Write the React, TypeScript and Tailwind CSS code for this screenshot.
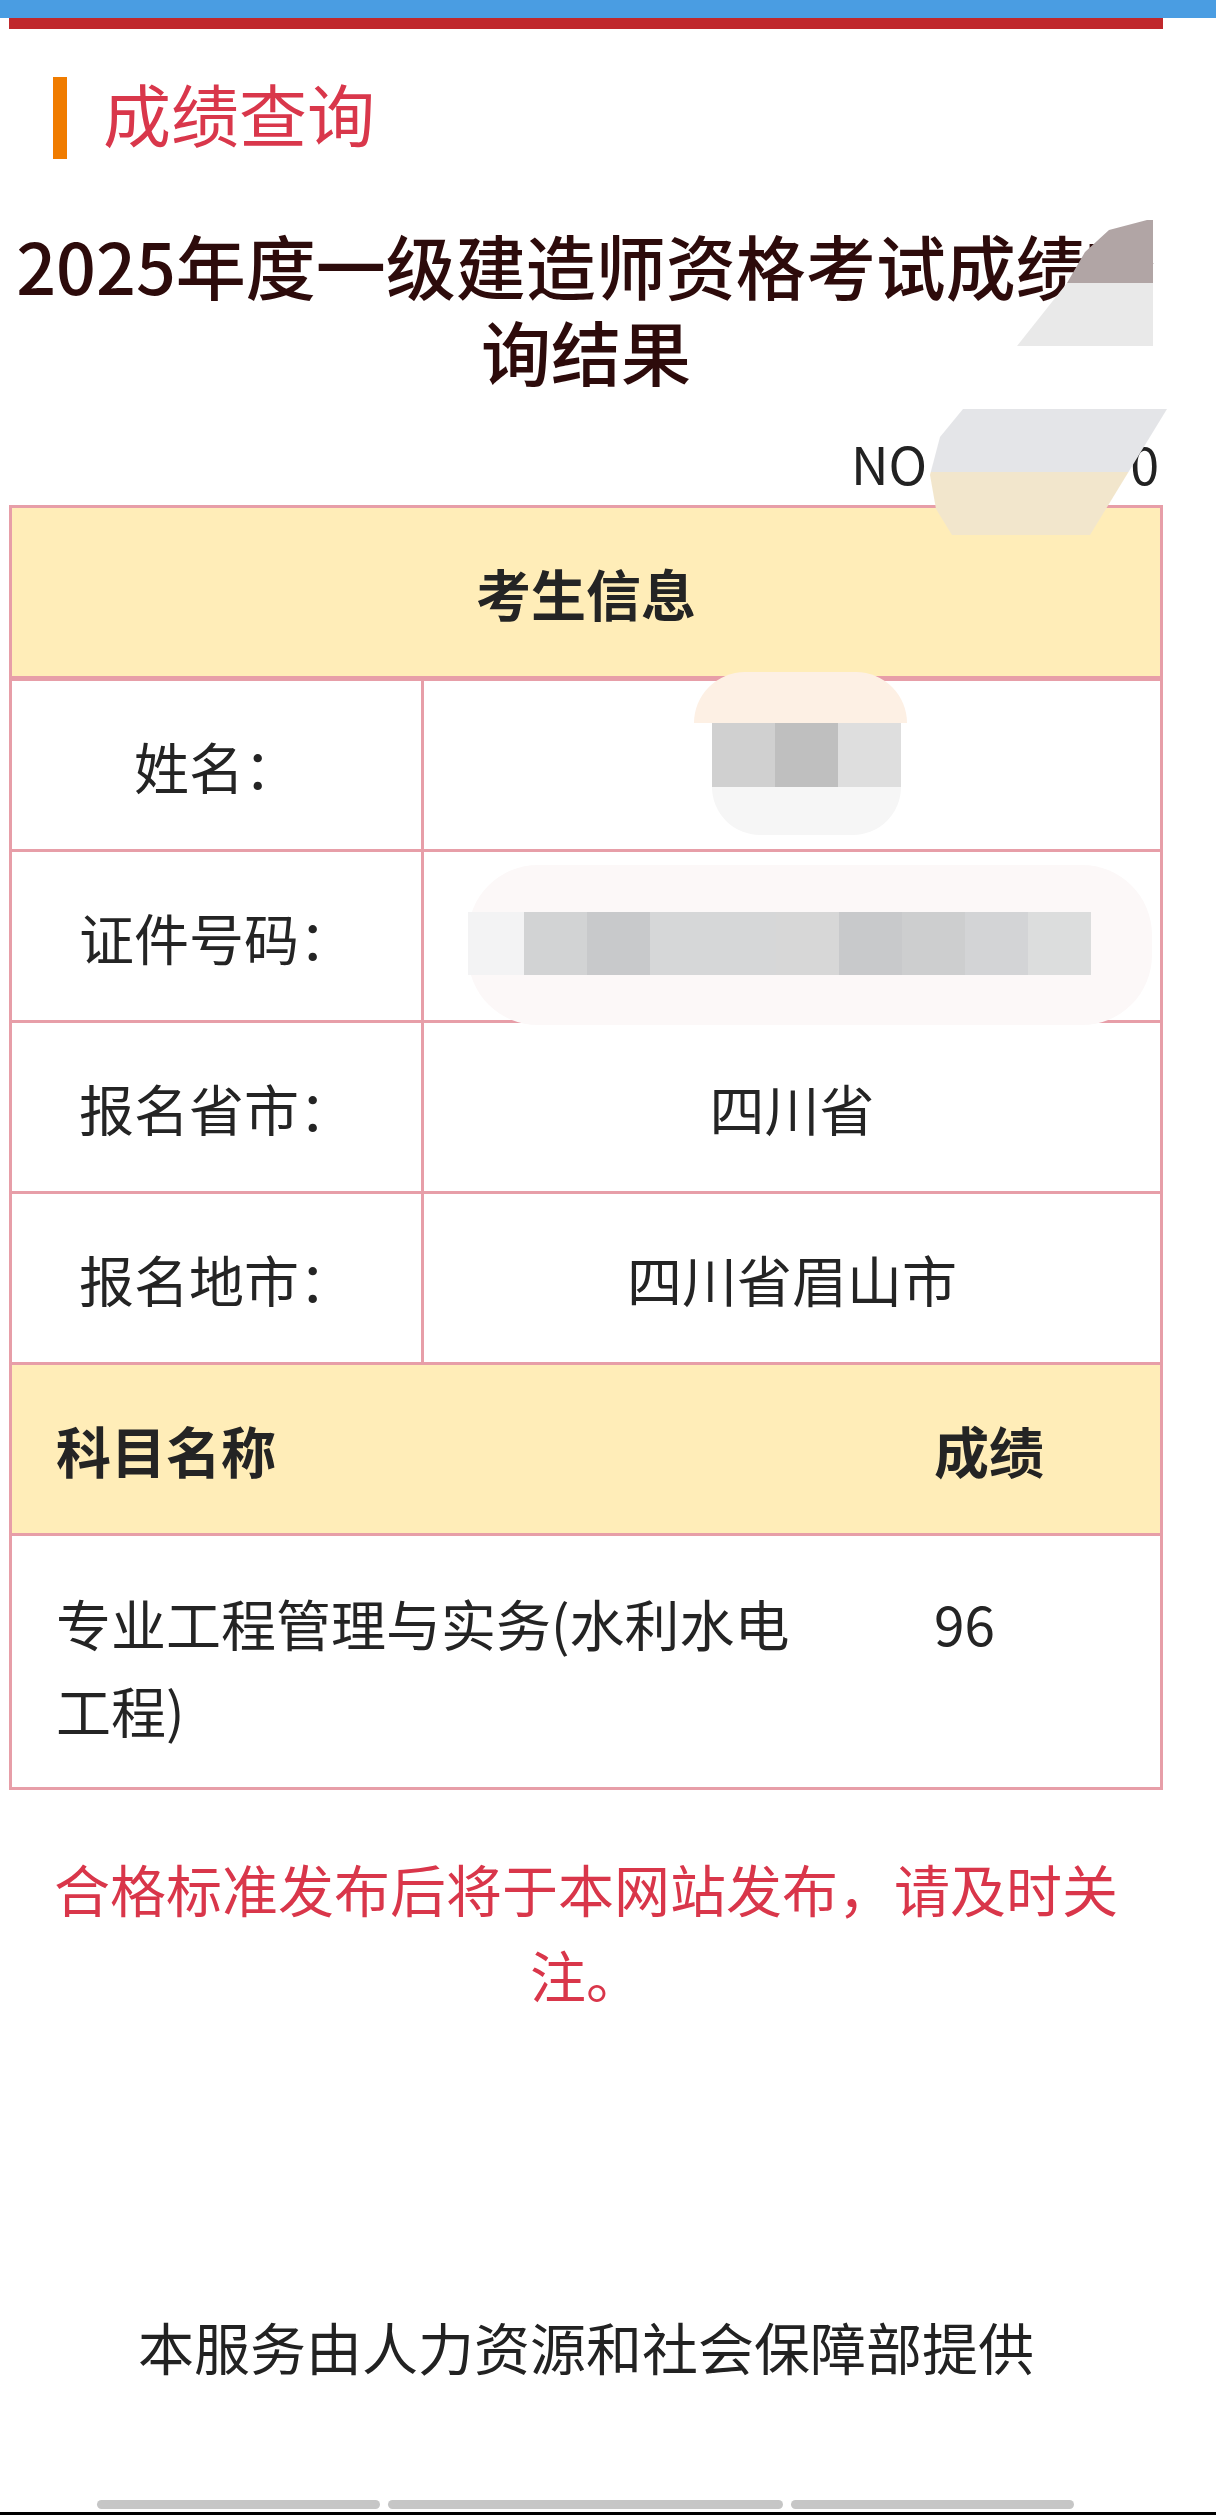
const infoRows = [
  { label: '姓名：', value: '' },
  { label: '证件号码：', value: '' },
  { label: '报名省市：', value: '四川省' },
  { label: '报名地市：', value: '四川省眉山市' },
];

const idCells = ['#d2d3d4', '#c8c9cb', '#d6d7d8', '#d6d7d8', '#d7d7d7', '#c8c9cb', '#cdcecf', '#d3d4d6', '#dcdddd'];

function Masks() {
  return (
    <>
      {/* title tail */}
      <div className="absolute left-[1017px] top-[220px] h-[126px] w-[136px] bg-[linear-gradient(to_bottom,#b1a5a5_50%,#e9e9e9_50%)] [clip-path:polygon(130px_0,136px_0,136px_126px,0_126px,50px_63px,68px_32px,92px_10px)]" />
      {/* number */}
      <div className="absolute left-[930px] top-[409px] h-[126px] w-[237px] bg-[linear-gradient(to_bottom,#e4e5e8_50%,#f2e6cc_50%)] [clip-path:polygon(33px_0,237px_0,160px_126px,22px_126px,6px_100px,0_66px,10px_28px)]" />
      {/* name */}
      <div className="absolute left-[694px] top-[672px] h-[51px] w-[213px] rounded-t-[100px] bg-[#fdf0e4]" />
      <div className="absolute left-[712px] top-[723px] flex h-[64px]">
        <span className="w-[63px] bg-[#d0d0d0]" />
        <span className="w-[63px] bg-[#bfbfbf]" />
        <span className="w-[63px] bg-[#dedede]" />
      </div>
      <div className="absolute left-[712px] top-[787px] h-[48px] w-[189px] rounded-b-[60px] bg-[#f6f6f6]" />
      {/* id number */}
      <div className="absolute left-[468px] top-[865px] h-[160px] w-[684px] rounded-[70px] bg-[#fcf8f8]" />
      <div className="absolute left-[468px] top-[912px] flex h-[63px]">
        <span className="w-[56px] bg-[#f3f3f4]" />
        {idCells.map((c, i) => (
          <span key={i} className="w-[63px]" style={{ backgroundColor: c }} />
        ))}
      </div>
    </>
  );
}

export default function App() {
  return (
    <div className="relative min-h-[2516px] w-full overflow-hidden bg-white font-['Noto_Sans_CJK_SC','Noto_Sans',sans-serif] text-[#242424]">
      <div className="h-[18px] bg-[#4a9de2]" />

      <div className="ml-[9px] w-[1154px]">
        <div className="h-[11px] bg-[#c0282c]" />

        <div className="mt-[43px] flex items-center">
          <span className="ml-[44px] h-[82px] w-[14px] bg-[#f07c00]" />
          <h2 className="mb-[10px] ml-[36px] text-[68px] leading-[82px] text-[#d9374b]">成绩查询</h2>
        </div>

        <h1 className="mt-[58px] text-center text-[70px] font-medium leading-[86px] text-[#2d0b0b]">
          2025年度一级建造师资格考试成绩查询结果
        </h1>

        <p className="mt-[39px] pr-[4px] text-right text-[52px] leading-[60px] text-[#222]">
          NO<span className="inline-block w-[203px]" />0
        </p>

        <div className="mt-[12px] border-[3px] border-[#e79ea8]">
          <div className="flex h-[173px] items-center justify-center border-b-[5px] border-[#e79ea8] bg-[#ffedb8] text-[55px] font-bold">
            考生信息
          </div>

          {infoRows.map((row) => (
            <div key={row.label} className="grid h-[171px] grid-cols-[412px_1fr] border-b-[3px] border-[#e79ea8] text-[55px]">
              <div className="flex items-center justify-center border-r-[3px] border-[#e79ea8]">{row.label}</div>
              <div className="flex items-center justify-center">{row.value}</div>
            </div>
          ))}

          <div className="grid h-[171px] grid-cols-[878px_1fr] items-center border-b-[3px] border-[#e79ea8] bg-[#ffedb8] text-[55px] font-bold">
            <div className="pl-[44px]">科目名称</div>
            <div className="pl-[44px]">成绩</div>
          </div>

          <div className="grid h-[251px] grid-cols-[878px_1fr] items-start pt-[43px] text-[55px] leading-[87px]">
            <div className="pl-[44px] pr-[64px]">专业工程管理与实务(水利水电工程)</div>
            <div className="pl-[44px]">96</div>
          </div>
        </div>

        <p className="mt-[55px] px-[30px] text-center text-[56px] leading-[86px] text-[#d9364a]">
          合格标准发布后将于本网站发布，请及时关注。
        </p>

        <p className="mt-[286px] text-center text-[56px] leading-[86px] text-[#222]">
          本服务由人力资源和社会保障部提供
        </p>
      </div>

      <div className="mt-[111px] flex gap-[8px] pl-[97px]">
        <span className="h-[9px] w-[283px] rounded-full bg-[#c6c6c6]" />
        <span className="h-[9px] w-[395px] rounded-full bg-[#c6c6c6]" />
        <span className="h-[9px] w-[283px] rounded-full bg-[#c6c6c6]" />
      </div>
      <div className="mt-[3px] h-[3px] bg-black" />

      <Masks />
    </div>
  );
}
